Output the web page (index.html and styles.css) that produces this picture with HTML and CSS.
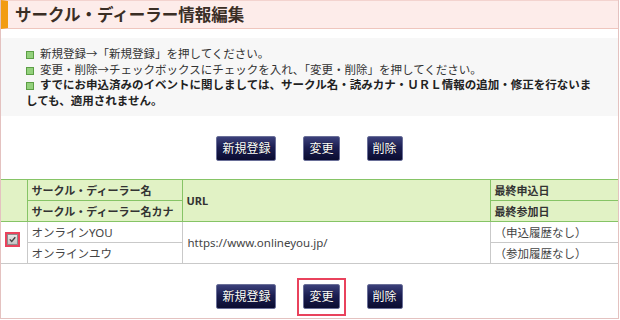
FILE: index.html
```html
<!DOCTYPE html>
<html lang="ja">
<head>
  <meta charset="UTF-8">
  <meta name="viewport" content="width=device-width, initial-scale=1.0">
  <title>サークル・ディーラー情報編集</title>
  <link rel="stylesheet" href="styles.css">
</head>
<body>
  <div class="frame">
    <h1 class="page-title">サークル・ディーラー情報編集</h1>

    <div class="notice">
      <p><span class="mark"></span>新規登録→「新規登録」を押してください。</p>
      <p><span class="mark"></span>変更・削除→チェックボックスにチェックを入れ、「変更・削除」を押してください。</p>
      <p class="important"><span class="mark"></span>すでにお申込済みのイベントに関しましては、サークル名・読みカナ・ＵＲＬ情報の追加・修正を行ないましても、適用されません。</p>
    </div>

    <div class="actions">
      <button class="btn">新規登録</button>
      <button class="btn">変更</button>
      <button class="btn">削除</button>
    </div>

    <table class="list">
      <colgroup>
        <col class="col-check">
        <col class="col-name">
        <col class="col-url">
        <col>
      </colgroup>
      <tr>
        <th class="check" rowspan="2"></th>
        <th>サークル・ディーラー名</th>
        <th rowspan="2">URL</th>
        <th class="date">最終申込日</th>
      </tr>
      <tr>
        <th>サークル・ディーラー名カナ</th>
        <th class="date">最終参加日</th>
      </tr>
      <tr>
        <td class="check" rowspan="2">
          <span class="checkbox marked">
            <svg width="9" height="9" viewBox="0 0 9 9"><path d="M1.8 4.4 L3.7 6.5 L7.3 2.2" fill="none" stroke="#444" stroke-width="1.4"/></svg>
          </span>
        </td>
        <td>オンラインYOU</td>
        <td class="url" rowspan="2">https://www.onlineyou.jp/</td>
        <td class="date">（申込履歴なし）</td>
      </tr>
      <tr>
        <td>オンラインユウ</td>
        <td class="date">（参加履歴なし）</td>
      </tr>
    </table>

    <div class="actions">
      <button class="btn">新規登録</button>
      <button class="btn marked">変更</button>
      <button class="btn">削除</button>
    </div>
  </div>
</body>
</html>
```

FILE: styles.css
```css
* {
  box-sizing: border-box;
}
body {
  margin: 0;
  font-family: "Noto Sans", "Noto Sans CJK JP", sans-serif;
  font-size: 11.5px;
  color: #333;
  background: #fff;
}
.frame {
  width: 619px;
  height: 319px;
  border: 1px solid #e4c2c0;
  border-top: none;
}
.page-title {
  margin: 0;
  height: 29px;
  line-height: 27px;
  padding-left: 7px;
  font-size: 16.5px;
  font-weight: bold;
  color: #3a2e25;
  background: #fdecea;
  border-top: 1px solid #f3d3cf;
  border-bottom: 1px solid #efc6be;
  border-left: 7px solid #f29c12;
}
.notice {
  margin-top: 9px;
  padding: 8px 20px 7px 25px;
  background: #f7f7f7;
  line-height: 15.7px;
}
.notice p {
  margin: 0;
}
.notice .important {
  font-weight: bold;
  color: #222;
}
.mark {
  display: inline-block;
  width: 8px;
  height: 8px;
  margin-right: 6px;
  border: 1px solid #5c9e45;
  background: #93d17c;
  vertical-align: -1px;
}
.actions {
  display: flex;
  justify-content: center;
  gap: 27px;
  margin-top: 20px;
}
.btn {
  height: 25px;
  padding: 0 5px;
  font-family: inherit;
  font-size: 12px;
  color: #fff;
  border: 1px solid #6a6f98;
  border-radius: 2px;
  background: linear-gradient(to bottom, #3b407a 0%, #1b1e52 45%, #0b0c30 100%);
  text-shadow: 0 0 1px #000;
  cursor: pointer;
}
.btn.marked {
  position: relative;
}
.btn.marked::after {
  content: "";
  position: absolute;
  top: -7px;
  bottom: -8px;
  left: -7px;
  right: -7px;
  border: 2px solid #e9425c;
}
.list {
  width: 100%;
  margin-top: 18px;
  border-collapse: collapse;
  font-size: 11px;
}
.col-check {
  width: 26px;
}
.col-name {
  width: 155px;
}
.col-url {
  width: 308px;
}
.list th,
.list td {
  height: 21px;
  padding: 0 3px 0 4px;
  text-align: left;
  white-space: nowrap;
}
.list th {
  background: #e1f2c5;
  border: 1px solid #86c466;
  font-weight: bold;
  color: #333;
}
.list td {
  border: 1px solid #c9c9c9;
  color: #444;
  font-size: 11.5px;
}
.list .check {
  border-left: none;
  padding: 0 2px 0 0;
  text-align: center;
}
.list .date {
  border-right: none;
}
.list td.url {
  padding-left: 5px;
}
.checkbox {
  position: relative;
  display: inline-block;
  width: 11px;
  height: 11px;
  margin-bottom: 6px;
  border: 1px solid #8c8c8c;
  background: linear-gradient(to bottom, #e6e6e6, #c4c4c4);
  vertical-align: middle;
}
.checkbox svg {
  display: block;
}
.checkbox.marked::after {
  content: "";
  position: absolute;
  top: -3px;
  bottom: -3px;
  left: -3px;
  right: -3px;
  border: 2px solid #e9425c;
}
```
